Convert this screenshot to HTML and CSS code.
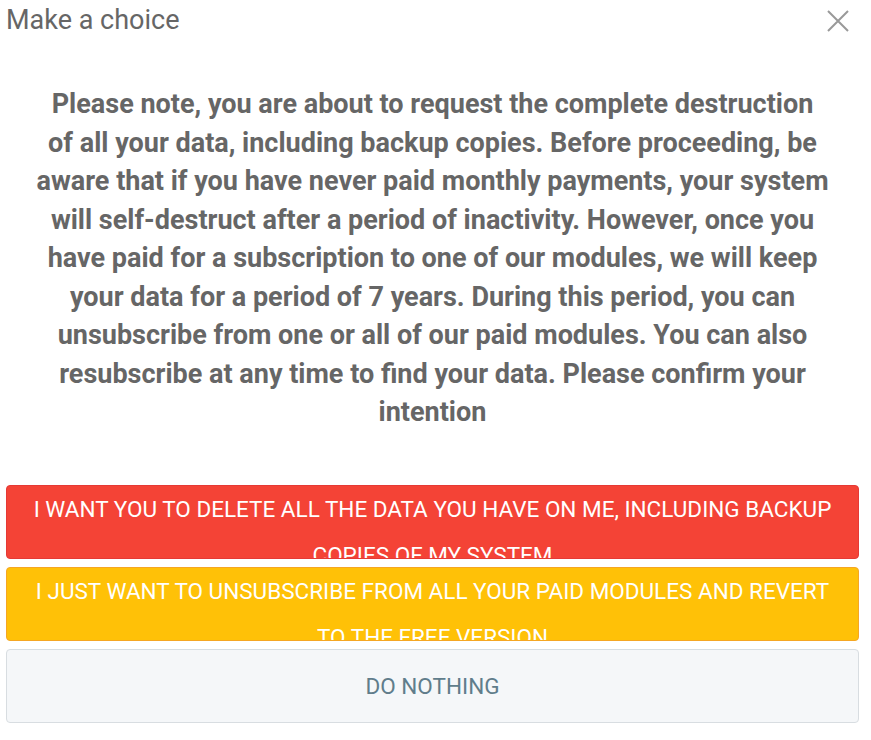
FILE: index.html
```html
<!DOCTYPE html>
<html lang="en">
<head>
<meta charset="utf-8">
<title>Make a choice</title>
<link rel="stylesheet" href="styles.css">
</head>
<body>
<div class="modal">
  <div class="modal-header">
    <h2 class="modal-title">Make a choice</h2>
    <button class="close" aria-label="Close">
      <svg width="22" height="22" viewBox="0 0 22 22"><path d="M1 1 L21 21 M21 1 L1 21" stroke="#999" stroke-width="2" fill="none"/></svg>
    </button>
  </div>
  <div class="modal-body">
    <p class="notice">Please note, you are about to request the complete destruction of all your data, including backup copies. Before proceeding, be aware that if you have never paid monthly payments, your system will self-destruct after a period of inactivity. However, once you have paid for a subscription to one of our modules, we will keep your data for a period of 7 years. During this period, you can unsubscribe from one or all of our paid modules. You can also resubscribe at any time to find your data. Please confirm your intention</p>
  </div>
  <div class="actions">
    <button class="btn btn-danger">I WANT YOU TO DELETE ALL THE DATA YOU HAVE ON ME, INCLUDING BACKUP COPIES OF MY SYSTEM</button>
    <button class="btn btn-warning">I JUST WANT TO UNSUBSCRIBE FROM ALL YOUR PAID MODULES AND REVERT TO THE FREE VERSION</button>
    <button class="btn btn-light">DO NOTHING</button>
  </div>
</div>
</body>
</html>
```
FILE: styles.css
```css
html, body {
  margin: 0;
  padding: 0;
  background: #fff;
}
body {
  font-family: Roboto, "Liberation Sans", sans-serif;
}
.modal {
  width: 853px;
  margin-left: 6px;
}
.modal-header {
  display: flex;
  justify-content: space-between;
  align-items: flex-start;
  height: 42px;
}
.modal-title {
  margin: 0;
  font-weight: 400;
  font-size: 27px;
  line-height: 40px;
  color: #666;
}
.close {
  background: none;
  border: 0;
  padding: 0;
  margin: 10px 10px 0 0;
  width: 22px;
  height: 22px;
  cursor: pointer;
}
.close svg { display: block; }
.modal-body {
  padding: 43px 30px 0;
}
.notice {
  margin: 0;
  text-align: center;
  font-weight: 700;
  font-size: 27px;
  line-height: 38.5px;
  color: #666;
}
.actions {
  display: flex;
  flex-direction: column;
  gap: 7.5px;
  margin-top: 53px;
}
.btn {
  display: block;
  width: 100%;
  height: 74.5px;
  overflow: hidden;
  padding: 0 22px;
  border-radius: 4px;
  font-family: Roboto, "Liberation Sans", sans-serif;
  font-size: 22.5px;
  line-height: 46.5px;
  text-align: center;
  color: #fff;
  cursor: pointer;
}
.btn-danger {
  background: #f44336;
  border: 1px solid #e53935;
}
.btn-warning {
  background: #ffc107;
  border: 1px solid #f5a623;
}
.btn-light {
  background: #f5f7f9;
  border: 1px solid #d8dde1;
  color: #607d8b;
  line-height: 72.5px;
}
```
